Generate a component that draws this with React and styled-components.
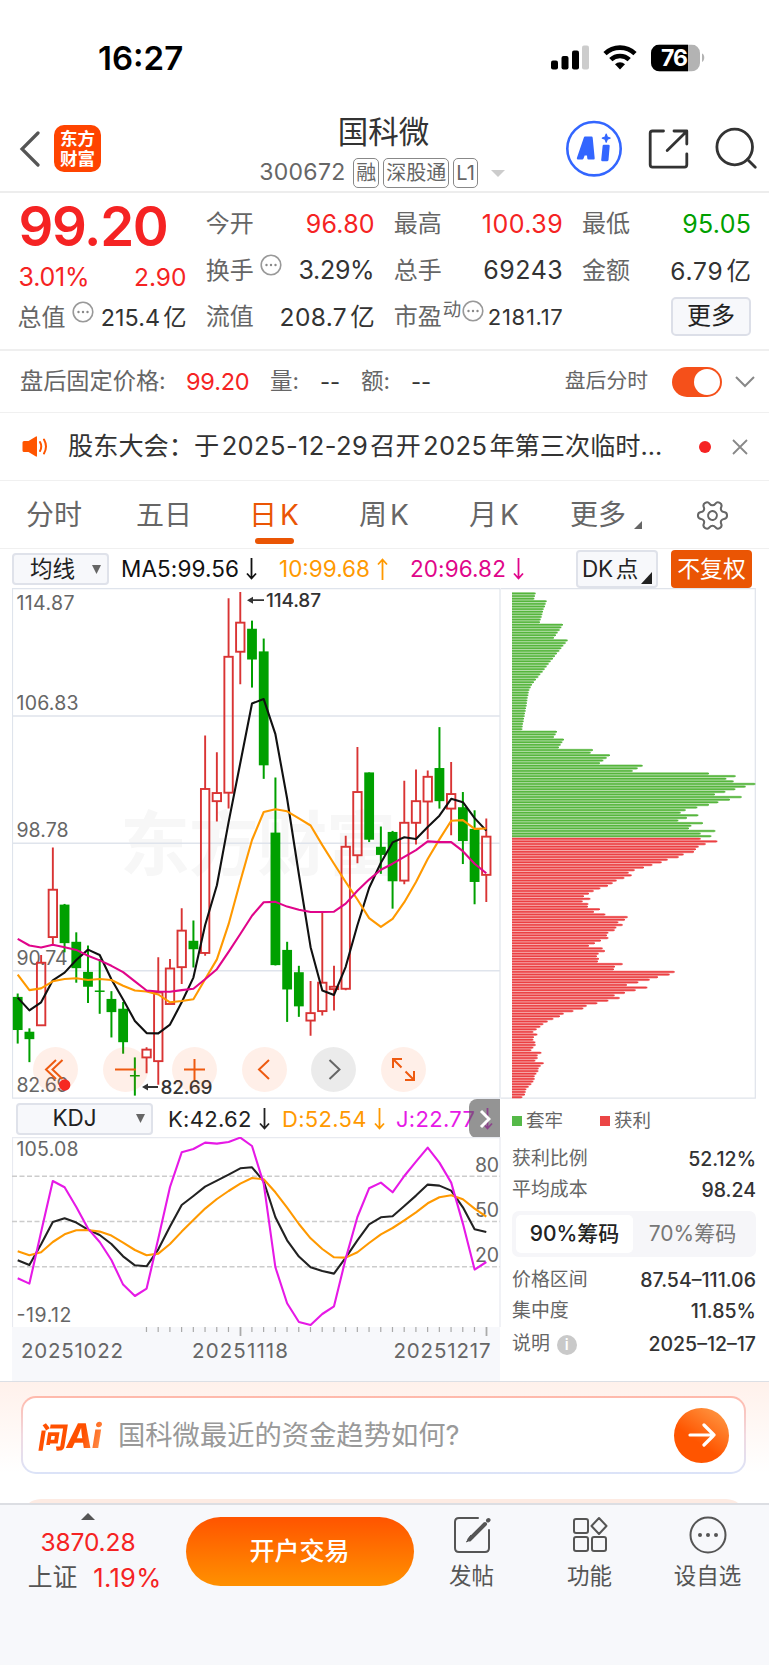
import React from "react";
import styled, { createGlobalStyle } from "styled-components";
import { Settings } from "lucide-react";

const GlobalStyle = createGlobalStyle`
  * {
    box-sizing: border-box;
  }
  body {
    margin: 0;
    background: #fff;
    color: #333;
    font-family: Inter, "Noto Sans CJK SC", sans-serif;
  }
  svg {
    display: block;
    flex: none;
  }
`;

/* ---------- chart data ---------- */

// [up, body top, body bottom, wick top, wick bottom]
const CANDLES = [
  [0, 1232, 1330, 1222, 1370], [0, 1335, 1357, 1325, 1425], [1, 1131, 1316, 1108, 1316],
  [1, 915, 1055, 790, 1078], [0, 959, 1073, 957, 1100], [0, 1069, 1147, 1041, 1190],
  [0, 1158, 1202, 1080, 1250], [0, 1213, 1217, 1120, 1282], [0, 1238, 1277, 1215, 1352],
  [0, 1267, 1366, 1247, 1400], [0, 1463, 1467, 1411, 1524], [1, 1388, 1411, 1381, 1458],
  [1, 1219, 1422, 1115, 1492], [1, 1148, 1253, 1120, 1253], [1, 1036, 1144, 970, 1194],
  [0, 1066, 1091, 1006, 1145], [1, 617, 1102, 459, 1110], [1, 629, 653, 508, 713],
  [1, 226, 628, 53, 675], [1, 125, 211, 34, 307], [0, 143, 234, 119, 317],
  [0, 210, 547, 172, 587], [0, 746, 1138, 583, 1139], [0, 1093, 1210, 1069, 1306],
  [0, 1159, 1260, 1140, 1291], [1, 1280, 1302, 1185, 1347], [1, 1190, 1274, 981, 1287],
  [1, 1202, 1209, 1140, 1272], [1, 788, 1208, 755, 1212], [1, 626, 813, 493, 837],
  [0, 568, 767, 568, 774], [0, 788, 812, 728, 868], [0, 744, 890, 741, 971],
  [1, 717, 888, 593, 899], [1, 653, 717, 559, 781], [1, 581, 654, 562, 766],
  [0, 555, 653, 434, 675], [1, 632, 675, 537, 754], [0, 671, 771, 626, 839],
  [0, 735, 892, 680, 958], [1, 758, 871, 704, 951],
];

const MA5 = [
  1234, 1272, 1248, 1183, 1160, 1123, 1092, 1108, 1180, 1240, 1303, 1339, 1340, 1314,
  1248, 1175, 1020, 902, 715, 540, 364, 351, 455, 645, 870, 1085, 1213, 1226, 1143,
  1020, 910, 835, 775, 760, 765, 729, 696, 646, 656, 703, 740,
];
const MA10 = [
  1166, 1212, 1207, 1186, 1179, 1177, 1182, 1179, 1182, 1199, 1213, 1216, 1225, 1248,
  1244, 1239, 1180, 1121, 1017, 890, 768, 685, 677, 683, 704, 725, 783, 838, 892, 944,
  999, 1025, 1001, 952, 892, 824, 766, 711, 709, 735, 734,
];
const MA20 = [
  1060, 1080, 1086, 1078, 1085, 1093, 1110, 1124, 1140, 1159, 1186, 1213, 1216, 1217,
  1212, 1208, 1180, 1150, 1099, 1046, 992, 952, 951, 965, 974, 981, 981, 980, 956, 918,
  885, 856, 838, 818, 798, 772, 774, 774, 801, 838, 866,
];

const KDJ_K = [
  510, 524, 462, 395, 384, 397, 418, 434, 461, 498, 525, 528, 477, 409, 344, 317, 289,
  271, 253, 234, 231, 273, 381, 450, 499, 531, 542, 550, 502, 450, 402, 381, 378, 347,
  316, 283, 286, 301, 351, 417, 425,
];
const KDJ_D = [
  483, 495, 486, 455, 432, 420, 419, 424, 436, 457, 479, 495, 490, 461, 424, 389, 355,
  326, 302, 280, 263, 267, 306, 352, 401, 444, 476, 501, 502, 486, 458, 432, 413, 390,
  366, 339, 321, 315, 327, 355, 379,
];
const KDJ_J = [
  564, 580, 425, 272, 291, 350, 415, 455, 509, 583, 617, 595, 445, 290, 186, 176, 157,
  160, 155, 142, 167, 280, 531, 639, 695, 704, 671, 648, 505, 380, 294, 277, 306, 257,
  214, 172, 217, 277, 400, 538, 515,
];

// chip distribution, one value per price level
const CHIPS_LOSS = [
  107, 105, 103, 140, 137, 135, 131, 129, 127, 125, 122, 120, 189, 184, 179, 173, 168,
  162, 203, 197, 190, 184, 178, 171, 165, 159, 152, 146, 140, 134, 128, 121, 115, 108,
  102, 96, 92, 88, 86, 85, 83, 82, 81, 80, 78, 77, 75, 74, 72, 71, 69, 68, 67, 171, 167,
  162, 192, 187, 182, 177, 279, 272, 330, 320, 310, 300, 428, 413, 398, 627, 707, 679,
  701, 766, 737, 706, 676, 645, 725, 690, 655, 627, 592, 557, 542, 595, 561, 535, 609,
  574, 567, 646, 602, 634,
];
const CHIPS_GAIN = [
  602, 652, 617, 596, 588, 582, 551, 536, 503, 485, 457, 432, 404, 386, 395, 373, 350,
  338, 324, 301, 281, 267, 252, 271, 248, 265, 264, 300, 282, 316, 383, 375, 355, 368,
  349, 344, 325, 321, 325, 303, 285, 267, 308, 315, 296, 291, 297, 294, 368, 345, 342,
  524, 509, 474, 449, 415, 381, 442, 407, 375, 344, 359, 325, 292, 260, 250, 220, 191,
  180, 160, 143, 130, 121, 110, 100, 112, 102, 100, 106, 107, 100, 94, 124, 113, 113,
  106, 131, 122, 116, 115, 109, 104, 104, 100, 94, 86, 79, 77, 75, 67,
];

const STEP = 11.715;
const xAt = (i) => 5.7 + i * STEP;
const priceY = (v) => v / 2.958 - 7.6;
const kdjY = (v) => v / 3 - 46.7;
const toPoints = (list, y) =>
  list.map((v, i) => `${xAt(i).toFixed(1)},${y(v).toFixed(1)}`).join(" ");

/* ---------- shared ---------- */

const Page = styled.div`
  width: 769px;
  height: 1665px;
  overflow: hidden;
  display: flex;
  flex-direction: column;
  background: #fff;
`;

const Text = styled.span`
  font-size: ${(p) => p.$size || 25}px;
  line-height: 1;
  color: ${(p) => p.$color || "#333"};
  font-weight: ${(p) => p.$weight || 400};
  letter-spacing: ${(p) => p.$ls || 0}px;
  margin-right: ${(p) => -(p.$ls || 0)}px;
  white-space: nowrap;
`;

const Row = styled.div`
  display: flex;
  align-items: center;
  gap: ${(p) => p.$gap || 0}px;
`;

/* ---------- status bar ---------- */

const StatusBar = styled.div`
  height: 106px;
  padding: 10px 63px 0 98px;
  display: flex;
  align-items: center;
  justify-content: space-between;
`;

const StatusIcons = () => (
  <svg width="156" height="30" viewBox="550 42.500 156 30">
    <rect x="551" y="60" width="7" height="9" rx="2" />
    <rect x="561.5" y="55.5" width="7" height="13.5" rx="2" />
    <rect x="572" y="50" width="7" height="19" rx="2" />
    <rect x="582" y="45" width="7" height="24" rx="2" fill="#ccc" />
    <g fill="none" stroke="#000" strokeWidth="4.6">
      <path d="M605 53.2a21.500 21.500 0 0 1 30 0" />
      <path d="M610.800 59.200a13.200 13.200 0 0 1 18.400 0" />
    </g>
    <path d="M620 69l-5-5.200a7.200 7.200 0 0 1 10 0z" />
    <clipPath id="cell">
      <rect x="651" y="44" width="49" height="27" rx="8.500" />
    </clipPath>
    <g clipPath="url(#cell)">
      <rect x="651" y="44" width="49" height="27" fill="#b3b3b3" />
      <rect x="651" y="44" width="37" height="27" />
    </g>
    <path d="M702 53c3 1 3 7 0 8.500z" fill="#b3b3b3" />
    <text x="661" y="65.500" fontSize="23" fontWeight="700" fill="#fff" textLength="27">
      76
    </text>
  </svg>
);

/* ---------- header ---------- */

const HeaderBar = styled.header`
  height: 87px;
  border-bottom: 2px solid #ededed;
  display: grid;
  grid-template-columns: 240px 1fr 240px;
  align-items: center;
`;

const HeaderLeft = styled.div`
  display: flex;
  align-items: center;
  gap: 14px;
  padding: 0 0 0 19px;
`;

const Logo = styled.div`
  width: 47px;
  height: 47px;
  border-radius: 10px;
  background: #ff4400;
  color: #fff;
  display: flex;
  flex-direction: column;
  align-items: center;
  justify-content: center;
  font-size: 17.500px;
  line-height: 19.500px;
  font-weight: 600;
`;

const HeaderTitle = styled.div`
  display: flex;
  flex-direction: column;
  align-items: center;
  gap: 10px;
  padding: 8px 2px 0 0;
`;

const Badge = styled.span`
  height: 30px;
  padding: 0 2px;
  border: 1.500px solid #888;
  border-radius: 5px;
  font-size: 20px;
  line-height: 28px;
  color: #666;
`;

const Code = styled(Text)`
  padding-right: 4px;
`;

const HeaderRight = styled.div`
  display: flex;
  justify-content: flex-end;
  padding: 1px 11px 0 0;
`;

const Header = () => (
  <HeaderBar>
    <HeaderLeft>
      <svg width="21" height="36" viewBox="0 0 21 36" fill="none">
        <path d="M19 2L3 18l16 16" stroke="#555" strokeWidth="3.200" strokeLinecap="round" />
      </svg>
      <Logo>
        <span>东方</span>
        <span>财富</span>
      </Logo>
    </HeaderLeft>
    <HeaderTitle>
      <Text $size={30.500}>国科微</Text>
      <Row $gap={4}>
        <Code $size={23} $color="#666" $ls={0.3}>300672</Code>
        <Badge>融</Badge>
        <Badge>深股通</Badge>
        <Badge>L1</Badge>
        <svg width="26" height="8" viewBox="0 0 26 8">
          <path d="M9 1h14l-7 7z" fill="#ccc" />
        </svg>
      </Row>
    </HeaderTitle>
    <HeaderRight>
      <svg width="192" height="58" viewBox="566 119 192 58" fill="none">
        <circle cx="594" cy="147.700" r="26.700" stroke="#3366ff" strokeWidth="2.600" />
        <g fill="#3366ff" stroke="#3366ff" strokeWidth="2.400" strokeLinejoin="round">
          <path
            fillRule="evenodd"
            d="M578 157.300l7-20.500h6.500l2 20.500h-5l-.4-4h-4.300l-1.500 4zM585.800 149.700h2.300l-.4-5.200z"
          />
          <path d="M603.800 145h4.700l-1.200 14h-4.900z" />
          <path strokeWidth="1.200" d="M606.200 133l1.100 3 2.800 1.100-2.800 1.100-1.100 3-1.100-3-2.800-1.100 2.800-1.100z" />
        </g>
        <g stroke="#333" strokeWidth="2.800" strokeLinecap="round" strokeLinejoin="round">
          <path d="M663.500 130h-11q-2.300 0-2.300 2.300v31.500q0 2.300 2.300 2.300h32q2.300 0 2.300-2.300v-11" />
          <path d="M674 130h12.800v13M686 131l-18.800 18.500" />
          <circle cx="734.700" cy="146" r="17.800" />
          <path d="M747.500 158.500l7.800 7.800" />
        </g>
      </svg>
    </HeaderRight>
  </HeaderBar>
);

/* ---------- quotes ---------- */

const Quotes = styled.section`
  height: 158px;
  border-bottom: 2px solid #efefef;
  padding: 8px 18px 0 18.500px;
  display: grid;
  grid-template-columns: repeat(4, 168px);
  justify-content: space-between;
`;

const QuoteRow = styled.div`
  height: ${(p) => p.$h || 46.500}px;
  display: flex;
  align-items: center;
  justify-content: space-between;
`;

const Label = styled.div`
  display: flex;
  align-items: center;
  margin-left: -1px;
  font-size: 24px;
  line-height: 1;
  color: #666;
  white-space: nowrap;
`;

const Unit = styled.span`
  margin-left: 3px;
`;

const MoreButton = styled.button`
  width: 80px;
  height: 39px;
  margin: -2px 0 0 auto;
  padding: 0 0 1px;
  border: 2px solid #dcdfe8;
  border-radius: 5px;
  background: #f7f8fb;
  font: inherit;
  font-size: 24px;
  line-height: 1;
  color: #222;
`;

const Sup = styled.span`
  font-size: 18.500px;
  margin: -16px 0 0 1px;
`;

const HintSvg = styled.svg`
  margin: -12px 0 0 ${(p) => p.$left}px;
`;

const Hint = ({ left = 6 }) => (
  <HintSvg $left={left} width="22" height="22" viewBox="0 0 22 22" fill="none">
    <circle cx="11" cy="11" r="9.800" stroke="#999" strokeWidth="1.600" />
    <g fill="#888">
      <circle cx="6.500" cy="11" r="1.200" />
      <circle cx="11" cy="11" r="1.200" />
      <circle cx="15.500" cy="11" r="1.200" />
    </g>
  </HintSvg>
);

const RED = "#f52323";
const GREEN = "#00a000";

const QuoteBoard = () => (
  <Quotes>
    <div>
      <QuoteRow $h={51}>
        <Text $size={54.500} $weight={600} $color={RED} $ls={-1.3}>99.20</Text>
      </QuoteRow>
      <QuoteRow $h={50}>
        <Text $color={RED} $ls={-0.2}>3.01%</Text>
        <Text $size={24.500} $color={RED}>2.90</Text>
      </QuoteRow>
      <QuoteRow $h={32}>
        <Label>总值<Hint /></Label>
        <Text $size={23.300} $ls={0.1}>215.4<Unit>亿</Unit></Text>
      </QuoteRow>
    </div>
    <div>
      <QuoteRow><Label>今开</Label><Text $color={RED} $ls={0.2}>96.80</Text></QuoteRow>
      <QuoteRow><Label>换手<Hint /></Label><Text $ls={-0.3}>3.29%</Text></QuoteRow>
      <QuoteRow><Label>流值</Label><Text $size={24.500} $ls={0.4}>208.7<Unit>亿</Unit></Text></QuoteRow>
    </div>
    <div>
      <QuoteRow><Label>最高</Label><Text $color={RED} $ls={0.5}>100.39</Text></QuoteRow>
      <QuoteRow><Label>总手</Label><Text $ls={0.5}>69243</Text></QuoteRow>
      <QuoteRow>
        <Label>市盈<Sup>动</Sup><Hint left={1} /></Label>
        <Text $size={22} $ls={0.7}>2181.17</Text>
      </QuoteRow>
    </div>
    <div>
      <QuoteRow><Label>最低</Label><Text $color={GREEN} $ls={0.3}>95.05</Text></QuoteRow>
      <QuoteRow><Label>金额</Label><Text $size={24.500} $ls={0.8}>6.79<Unit>亿</Unit></Text></QuoteRow>
      <QuoteRow><MoreButton>更多</MoreButton></QuoteRow>
    </div>
  </Quotes>
);

/* ---------- after hours + news ---------- */

const AfterHoursBar = styled.section`
  height: 62px;
  border-bottom: 1px solid #f0f0f0;
  padding: 0 14px 0 20px;
  display: flex;
  align-items: center;
`;

const Cell = styled.div`
  width: ${(p) => p.$w}px;
  flex: none;
  line-height: 1;
  white-space: nowrap;
`;

const Toggle = styled.div`
  width: 50px;
  height: 30px;
  margin: 0 13px 0 24px;
  padding: 2px;
  border-radius: 15px;
  background: #f5501a;
  display: flex;
  justify-content: flex-end;
  &::after {
    content: "";
    width: 26px;
    height: 26px;
    border-radius: 50%;
    background: #fff;
  }
`;

const Spacer = styled.div`
  flex: 1;
`;

const AfterHours = () => (
  <AfterHoursBar>
    <Cell $w={166}><Text $size={23.200} $color="#666">盘后固定价格:</Text></Cell>
    <Cell $w={84}><Text $size={23.500} $color={RED} $ls={-0.2}>99.20</Text></Cell>
    <Cell $w={50}><Text $size={22.500} $color="#666">量:</Text></Cell>
    <Cell $w={41}><Text $size={22}>--</Text></Cell>
    <Cell $w={50}><Text $size={22.500} $color="#666">额:</Text></Cell>
    <Cell $w={42}><Text $size={22}>--</Text></Cell>
    <Spacer />
    <Text $size={20.800} $color="#666">盘后分时</Text>
    <Toggle />
    <svg width="20" height="12" viewBox="0 0 20 12" fill="none" stroke="#888" strokeWidth="2">
      <path d="M1 1l9 9 9-9" />
    </svg>
  </AfterHoursBar>
);

const NewsBar = styled.section`
  height: 68px;
  border-bottom: 1px solid #f0f0f0;
  padding: 0 21px 0 22px;
  display: flex;
  align-items: center;
`;

const NewsText = styled.div`
  flex: 1;
  padding: 0 0 0 20px;
  font-size: 25.200px;
  line-height: 1;
  white-space: nowrap;
`;

const Num = styled.span`
  margin: 0 2px 0 2.500px;
  font-size: 25.500px;
  letter-spacing: 0.4px;
`;

const Dot = styled.span`
  width: 12px;
  height: 12px;
  border-radius: 50%;
  background: ${RED};
  margin-right: 21px;
`;

const News = () => (
  <NewsBar>
    <svg width="26" height="21" viewBox="0 0 26 21" fill="none">
      <path d="M2 5h4.500L14 .500q1-.500 1 .800v18.400q0 1.300-1 .800L6.500 16H2q-1.500 0-1.500-1.500v-8Q.500 5 2 5z" fill="#ff5500" />
      <g stroke="#ff5500" strokeWidth="2" strokeLinecap="round">
        <path d="M18 6q2.500 4.500 0 9M22 3.500q4 7 0 14" />
      </g>
    </svg>
    <NewsText>
      股东大会：于<Num>2025-12-29</Num>召开<Num>2025</Num>年第三次临时...
    </NewsText>
    <Dot />
    <svg width="16" height="16" viewBox="0 0 16 16" stroke="#888" strokeWidth="1.800">
      <path d="M1 1l14 14M15 1L1 15" />
    </svg>
  </NewsBar>
);

/* ---------- tabs ---------- */

const TabBar = styled.nav`
  height: 68px;
  border-bottom: 1px solid #f0f0f0;
  padding: 1px 39px 0 26px;
  display: flex;
  align-items: center;
`;

const Tab = styled.div`
  width: ${(p) => p.$w}px;
  flex: none;
  font-size: 28px;
  line-height: 1;
  word-spacing: -5px;
  color: ${(p) => (p.$active ? "#ea5504" : "#666")};
  white-space: nowrap;
`;

const TabLabel = styled.span`
  position: relative;
  display: inline-flex;
  align-items: flex-end;
  gap: ${(p) => p.$gap || 0}px;
  white-space: pre;
  &::after {
    content: "";
    display: ${(p) => (p.$active ? "block" : "none")};
    position: absolute;
    left: 6px;
    bottom: -15px;
    width: 39px;
    height: 6px;
    border-radius: 3px;
    background: #ea5504;
  }
`;

const GearBox = styled.div`
  margin-left: auto;
  transform: rotate(30deg);
`;

const TABS = [
  { label: "分时", width: 110 },
  { label: "五日", width: 113 },
  { label: "日 K", width: 110, active: true },
  { label: "周 K", width: 110 },
  { label: "月 K", width: 101 },
];

const Tabs = () => (
  <TabBar>
    {TABS.map((tab) => (
      <Tab key={tab.label} $w={tab.width} $active={tab.active}>
        <TabLabel $active={tab.active}>{tab.label}</TabLabel>
      </Tab>
    ))}
    <Tab $w={80}>
      <TabLabel $gap={8}>
        更多
        <svg width="8" height="8" viewBox="0 0 8 8"><path d="M8 0v8H0z" fill="#666" /></svg>
      </TabLabel>
    </Tab>
    <GearBox>
      <Settings size={35} strokeWidth={1.400} color="#666" />
    </GearBox>
  </TabBar>
);

/* ---------- indicators ---------- */

const IndicatorBar = styled.div`
  height: 39px;
  padding: 1px 17px 0 12px;
  display: flex;
  align-items: center;
`;

const Select = styled.div`
  width: ${(p) => p.$w}px;
  height: 32px;
  margin-right: ${(p) => p.$mr}px;
  padding: 0 6px 0 0;
  flex: none;
  border: 2px solid #dfe2ea;
  border-radius: 4px;
  background: #f7f8fb;
  display: flex;
  align-items: center;
`;

const SelectText = styled.span`
  flex: 1;
  padding-right: ${(p) => p.$pr || 0}px;
  text-align: center;
  font-size: 22.500px;
  line-height: 1;
  color: #222;
`;

const Value = styled.div`
  width: ${(p) => p.$w}px;
  flex: none;
  display: flex;
  align-items: center;
  gap: 7px;
  color: ${(p) => p.$color};
  font-size: ${(p) => p.$size || 22.500}px;
  line-height: 1;
  letter-spacing: ${(p) => p.$ls || 0}px;
  white-space: nowrap;
`;

const DkButton = styled.div`
  width: 82px;
  height: 38px;
  padding: 0 4px;
  border: 2px solid #dfe2ea;
  border-radius: 4px;
  background: #f7f8fb;
  display: flex;
  align-items: center;
  justify-content: space-between;
  color: #222;
  font-size: 22.500px;
  line-height: 1;
  white-space: nowrap;
  word-spacing: -3px;
  letter-spacing: -0.3px;
  svg {
    align-self: flex-end;
    margin: 0 0 2px -4px;
  }
`;

const RightsButton = styled.div`
  width: 81px;
  height: 38px;
  margin-left: auto;
  border-radius: 4px;
  background: #ea5504;
  color: #fff;
  font-size: 22.800px;
  line-height: 38px;
  text-align: center;
`;

const Caret = () => (
  <svg width="9" height="9" viewBox="0 0 9 9"><path d="M0 0h9L4.500 9z" fill="#666" /></svg>
);

const Trend = ({ up }) => (
  <svg width="11" height="22" viewBox="0 0 11 22" fill="none" stroke="currentColor" strokeWidth="1.800">
    <path d={up ? "M5.500 22V1.500M1 6.500l4.500-5 4.500 5" : "M5.500 0v20.500M1 15.500l4.500 5 4.500-5"} />
  </svg>
);

const PINK = "#e0058a";

const MaIndicators = () => (
  <IndicatorBar>
    <Select $w={97} $mr={12}><SelectText $pr={1}>均线</SelectText><Caret /></Select>
    <Value $w={158} $color="#111" $ls={0.1}>MA5:99.56<Trend /></Value>
    <Value $w={131} $color="#ff9900">10:99.68<Trend up /></Value>
    <Value $w={166} $color={PINK} $ls={0.1}>20:96.82<Trend /></Value>
    <DkButton>
      DK 点
      <svg width="11" height="12" viewBox="0 0 11 12"><path d="M11 0v12H0z" fill="#222" /></svg>
    </DkButton>
    <RightsButton>不复权</RightsButton>
  </IndicatorBar>
);

/* ---------- charts ---------- */

const ChartArea = styled.section`
  height: 794px;
  padding-left: 12px;
  border-bottom: 1px solid #dcdfe5;
  display: grid;
  grid-template-columns: 489px 268px;
  overflow: hidden;
`;

const KPane = styled.div`
  position: relative;
  height: 511px;
`;

const FloatRow = styled.div`
  position: absolute;
  left: 21px;
  top: 459px;
  display: flex;
  gap: 24.500px;
`;

const FloatButton = styled.div`
  width: 45px;
  height: 45px;
  border-radius: 50%;
  background: ${(p) => (p.$gray ? "rgba(0,0,0,0.08)" : "rgba(255,100,30,0.1)")};
  svg {
    width: 45px;
    height: 45px;
    fill: none;
    stroke: ${(p) => (p.$gray ? "#666" : "#ee5a10")};
    stroke-width: 2;
  }
`;

const FLOAT_ICONS = [
  "M23 13L13 22.500l10 9.500M29.500 13l-10 9.500 10 9.500",
  "M12 22.500h21",
  "M12 22.500h21M22.500 12v21",
  "M27 13l-10 9.500 10 9.500",
  "M18.500 13l10 9.500-10 9.500",
  "M12 21v-9h9M12 12l8.500 8.500M33 24v9h-9M33 33l-8.500-8.500",
];

const Line = ({ data, y, color }) => (
  <polyline points={toPoints(data, y)} fill="none" stroke={color} strokeWidth="2.100" strokeLinejoin="round" />
);

const Candle = ({ i, up, top, bottom, high, low }) => {
  const x = xAt(i);
  const [t, b, h, l] = [top, bottom, high, low].map(priceY);
  if (!up) {
    return (
      <g fill={GREEN}>
        <rect x={x - 1} y={h} width="2" height={l - h} />
        <rect x={x - 4.9} y={t} width="9.800" height={Math.max(b - t, 1.5)} />
      </g>
    );
  }
  return (
    <g fill="none" stroke="#d93434" strokeWidth="1.900">
      <path d={`M${x} ${h}V${t}M${x} ${b}V${l}`} />
      <rect x={x - 4.200} y={t} width="8.400" height={b - t} />
    </g>
  );
};

const PRICE_LABELS = [
  ["114.87", 21.6, 58], ["106.83", 122, 62], ["98.78", 249.3, 52],
  ["90.74", 376.7, 51], ["82.69", 504, 52],
];

const KChart = () => (
  <KPane>
    <svg width="489" height="511" viewBox="0 0 489 511">
      <text x="108" y="281.500" fontSize="70" fontWeight="700" fill="#f7f7f7" textLength="276">
        东方财富
      </text>
      <g stroke="#dfe4ec" strokeWidth="1.600" fill="none">
        <path d="M0 128h488M0 255.300h488M0 382.700h488" />
        <path d="M.5 .6h487.500v509.500H.5z" strokeWidth="1.200" />
      </g>
      <g fontSize="19.500" fill="#666">
        {PRICE_LABELS.map(([label, y, w]) => (
          <text key={label} x="4.500" y={y} textLength={w}>{label}</text>
        ))}
      </g>
      {CANDLES.map(([up, top, bottom, high, low], i) => (
        <Candle key={i} i={i} up={up} top={top} bottom={bottom} high={high} low={low} />
      ))}
      <Line data={MA5} y={priceY} color="#111" />
      <Line data={MA10} y={priceY} color="#ff9900" />
      <Line data={MA20} y={priceY} color={PINK} />
      <g fontSize="19" fontWeight="500" fill="#333">
        <path d="M235 12.200l6-3.500v2.600h11v1.800h-11v2.600z" />
        <text x="254" y="19.300" textLength="55">114.87</text>
        <path d="M130 499l6-3.500v2.600h10v1.800h-10v2.600z" />
        <text x="148.500" y="505.500" textLength="52">82.69</text>
      </g>
      <circle cx="52.700" cy="497" r="5.700" fill={RED} />
    </svg>
    <FloatRow>
      {FLOAT_ICONS.map((d, i) => (
        <FloatButton key={d} $gray={i === 4}>
          <svg viewBox="0 0 45 45"><path d={d} /></svg>
        </FloatButton>
      ))}
    </FloatRow>
  </KPane>
);

const KdjBar = styled.div`
  height: 38px;
  padding: 1px 0 0 4px;
  display: flex;
  align-items: center;
  overflow: hidden;
`;

const Expand = styled.div`
  width: 31px;
  height: 39px;
  margin-left: -25px;
  flex: none;
  border-radius: 8px 0 0 8px;
  background: rgba(90, 90, 90, 0.65);
  display: flex;
  align-items: center;
  justify-content: center;
  z-index: 1;
`;

const Axis = styled.div`
  width: 488px;
  height: 55px;
  background: #f7f8fb;
`;

const KdjPane = () => (
  <>
    <KdjBar>
      <Select $w={137} $mr={15}><SelectText $pr={5}>KDJ</SelectText><Caret /></Select>
      <Value $w={114} $color="#222" $size={22} $ls={0.3}>K:42.62<Trend /></Value>
      <Value $w={114} $color="#ff9900" $size={22} $ls={0.3}>D:52.54<Trend /></Value>
      <Value $w={98} $color="#e619e6" $size={22} $ls={0.3}>J:22.77<Trend /></Value>
      <Expand>
        <svg width="12" height="20" viewBox="0 0 12 20" fill="none" stroke="#fff" strokeWidth="3">
          <path d="M2 2l8 8-8 8" />
        </svg>
      </Expand>
    </KdjBar>
    <svg width="489" height="190" viewBox="0 0 489 190">
      <path d="M.5 190V.6h487.500V190" fill="none" stroke="#e8eaf0" strokeWidth="1.200" />
      <path d="M0 39.300h488M0 84.600h488M0 129.800h488" stroke="#ccc" strokeWidth="1.500" strokeDasharray="5 2.500" />
      <g fontSize="19.500" fill="#666">
        <text x="4.500" y="18.800" textLength="62">105.08</text>
        <text x="4.500" y="185.300" textLength="55">-19.12</text>
        <text x="463" y="34.500" textLength="24">80</text>
        <text x="463" y="79.700" textLength="24">50</text>
        <text x="463" y="125" textLength="24">20</text>
      </g>
      <Line data={KDJ_K} y={kdjY} color="#222" />
      <Line data={KDJ_D} y={kdjY} color="#ff9900" />
      <Line data={KDJ_J} y={kdjY} color="#e619e6" />
    </svg>
    <Axis>
      <svg width="488" height="55" viewBox="0 0 488 55">
        {CANDLES.slice(11).map((_, n) => {
          const i = n + 11;
          const long = i === 19 || i === 40;
          return (
            <rect key={i} x={xAt(i) - 0.7} y="0" width={long ? 1.8 : 1.2} height={long ? 9 : 5} fill="#aaa" />
          );
        })}
        <g fontSize="20.500" fill="#666">
          <text x="9" y="30.500" textLength="102">20251022</text>
          <text x="180" y="30.500" textLength="96">20251118</text>
          <text x="381.500" y="30.500" textLength="97">20251217</text>
        </g>
      </svg>
    </Axis>
  </>
);

/* ---------- chip panel ---------- */

const ChipPanel = styled.div`
  width: 255px;
  display: flex;
  flex-direction: column;
`;

const Stats = styled.div`
  padding-left: 11px;
`;

const Stat = styled.div`
  height: ${(p) => p.$h || 31}px;
  display: flex;
  align-items: center;
  justify-content: space-between;
  font-size: 18.900px;
  line-height: 1;
  color: #666;
  b {
    font-weight: 500;
    font-size: 19.500px;
    color: #333;
  }
`;

const Legend = styled.div`
  height: 45px;
  padding-bottom: 2px;
  display: flex;
  align-items: center;
`;

const LegendItem = styled.div`
  width: 88px;
  display: flex;
  align-items: center;
  gap: 4px;
  font-size: 18.500px;
  line-height: 1;
  color: #666;
  &::before {
    content: "";
    width: 10px;
    height: 10px;
    background: ${(p) => p.$color};
  }
`;

const Segment = styled.div`
  height: 46px;
  margin: 5px 0 8px;
  padding: 4px;
  border-radius: 7px;
  background: #f6f6f9;
  display: grid;
  grid-template-columns: 117px 1fr;
`;

const SegmentItem = styled.div`
  border-radius: 5px;
  background: ${(p) => (p.$active ? "#fff" : "transparent")};
  color: ${(p) => (p.$active ? "#222" : "#777")};
  font-weight: ${(p) => (p.$active ? 500 : 400)};
  font-size: 21px;
  line-height: 38px;
  text-align: center;
  white-space: nowrap;
`;

const Info = styled.span`
  display: inline-flex;
  width: 20px;
  height: 20px;
  margin-left: 7px;
  border-radius: 50%;
  background: #c9c9c9;
  color: #fff;
  font-size: 15px;
  font-weight: 600;
  align-items: center;
  justify-content: center;
`;

const PITCH = 2.61;

const ChipBars = ({ data, from, color }) =>
  data.map((end, i) => {
    const y = 4.2 + (from + i) * PITCH;
    const w = (end - 36) / 3;
    return (
      <g key={i} fill={color}>
        <rect x="11" y={y} width={w - 1} height={PITCH} opacity="0.5" />
        <rect x="11" y={y + 0.5} width={w} height="1.500" />
      </g>
    );
  });

const Chips = () => (
  <ChipPanel>
    <svg width="255" height="511" viewBox="0 0 255 511">
      <path d="M0 .6h254.300v509.500H0" fill="none" stroke="#dfe3ea" strokeWidth="1.200" />
      <ChipBars data={CHIPS_LOSS} from={0} color="#55b53c" />
      <ChipBars data={CHIPS_GAIN} from={CHIPS_LOSS.length} color="#eb3f42" />
    </svg>
    <Stats>
      <Legend>
        <LegendItem $color="#55b948">套牢</LegendItem>
        <LegendItem $color="#eb4545">获利</LegendItem>
      </Legend>
      <Stat>获利比例<b>52.12%</b></Stat>
      <Stat>平均成本<b>98.24</b></Stat>
      <Segment>
        <SegmentItem $active>90%筹码</SegmentItem>
        <SegmentItem>70%筹码</SegmentItem>
      </Segment>
      <Stat>价格区间<b>87.54–111.06</b></Stat>
      <Stat>集中度<b>11.85%</b></Stat>
      <Stat $h={35}>
        <Row>说明<Info>i</Info></Row>
        <b>2025–12–17</b>
      </Stat>
    </Stats>
  </ChipPanel>
);

/* ---------- ask ai ---------- */

const AskArea = styled.section`
  height: 121px;
  padding: 14px 23px 0 21px;
  background: linear-gradient(#fff1eb, #fff 75%);
  display: flex;
  flex-direction: column;
  overflow: hidden;
`;

const AskBox = styled.div`
  height: 78px;
  flex: none;
  padding: 1px 15px 0 16px;
  border: 2px solid transparent;
  border-radius: 15px;
  background:
    linear-gradient(#fff, #fff) padding-box,
    linear-gradient(#ffb9ab, #f1d9e0 50%, #dbe3f8) border-box;
  display: flex;
  align-items: center;
`;

const AskLogo = styled.div`
  width: 79px;
  flex: none;
  font-size: 34px;
  line-height: 1;
  font-weight: 800;
  letter-spacing: -0.8px;
  white-space: nowrap;
  transform: skewX(-9deg);
  color: transparent;
  background: linear-gradient(100deg, #ff5000 55%, #ff9a5a 85%);
  background-clip: text;
  span {
    font-size: 29px;
    font-weight: 900;
    letter-spacing: -1px;
  }
`;

const AskText = styled.div`
  flex: 1;
  font-size: 27.300px;
  line-height: 1;
  color: #999;
`;

const Go = styled.div`
  width: 55px;
  height: 55px;
  border-radius: 50%;
  margin-bottom: 1px;
  background: linear-gradient(215deg, #ff9440 10%, #ff5500 60%);
  display: flex;
  align-items: center;
  justify-content: center;
`;

const NextCard = styled.div`
  height: 40px;
  flex: none;
  margin-top: 25px;
  border-radius: 20px;
  background: #fdebe3;
`;

const AskAi = () => (
  <AskArea>
    <AskBox>
      <AskLogo><span>问</span>Ai</AskLogo>
      <AskText>国科微最近的资金趋势如何?</AskText>
      <Go>
        <svg width="28" height="24" viewBox="0 0 28 24" fill="none" stroke="#fff" strokeWidth="3.200" strokeLinecap="round" strokeLinejoin="round">
          <path d="M2 12h24M16 2l10 10-10 10" />
        </svg>
      </Go>
    </AskBox>
    <NextCard />
  </AskArea>
);

/* ---------- bottom bar ---------- */

const Bottom = styled.footer`
  height: 162px;
  border-top: 2px solid #dcdee3;
  background: #f7f8fb;
  padding-left: 21px;
  display: flex;
  align-items: flex-start;
`;

const IndexBox = styled.div`
  width: 134px;
  padding-top: 8px;
  display: flex;
  flex-direction: column;
  align-items: center;
  gap: 10px;
`;

const IndexRow = styled(Row)`
  margin-left: 13px;
`;

const TradeButton = styled.div`
  width: 228px;
  height: 69px;
  margin: 12px 0 0 30.500px;
  border-radius: 35px;
  background: linear-gradient(#ff5400, #ff9100);
  color: #fff;
  font-size: 25px;
  font-weight: 500;
  line-height: 68px;
  text-align: center;
`;

const Actions = styled.div`
  display: flex;
  margin-left: -1px;
`;

const Action = styled.div`
  width: 118px;
  padding-top: 11px;
  display: flex;
  flex-direction: column;
  align-items: center;
  gap: 11px;
  font-size: 22.500px;
  line-height: 1;
  color: #555;
`;

const ActionSvg = styled.svg.attrs({ width: 38, height: 38, viewBox: "0 0 38 38" })`
  fill: none;
  stroke: #555;
  stroke-width: 2;
  stroke-linejoin: round;
  stroke-linecap: round;
`;

const BottomBar = () => (
  <Bottom>
    <IndexBox>
      <svg width="14" height="7" viewBox="0 0 14 7"><path d="M7 0l7 7H0z" fill="#555" /></svg>
      <Text $size={24.500} $color={RED} $ls={-0.1}>3870.28</Text>
      <IndexRow $gap={16}>
        <Text $size={24.800} $color="#555">上证</Text>
        <Text $size={25.500} $color={RED} $ls={0.3}>1.19%</Text>
      </IndexRow>
    </IndexBox>
    <TradeButton>开户交易</TradeButton>
    <Actions>
      <Action>
        <ActionSvg>
          <path d="M25 2H6q-4 0-4 4v26q0 4 4 4h26q4 0 4-4V14" />
          <path d="M32 8L16.500 23.500" strokeWidth="4" />
          <path d="M17.500 19.500l-4 6.500 6.500-4z" fill="#555" strokeWidth="1" />
          <path d="M35.500 4l-.5.500" strokeWidth="4" />
        </ActionSvg>
        发帖
      </Action>
      <Action>
        <ActionSvg>
          <rect x="3" y="3" width="14" height="14" rx="2" />
          <rect x="3" y="21" width="14" height="14" rx="2" />
          <rect x="21" y="21" width="14" height="14" rx="2" />
          <path d="M28 2l7.500 8-7.500 8-7.500-8z" />
        </ActionSvg>
        功能
      </Action>
      <Action>
        <ActionSvg>
          <circle cx="19" cy="19" r="17.500" />
          <g fill="#555" stroke="none">
            <circle cx="11" cy="19" r="2" />
            <circle cx="19" cy="19" r="2" />
            <circle cx="27" cy="19" r="2" />
          </g>
        </ActionSvg>
        设自选
      </Action>
    </Actions>
  </Bottom>
);

const App = () => {
  return (
    <Page>
      <GlobalStyle />
      <StatusBar>
        <Text $size={33} $weight={600} $color="#000">16:27</Text>
        <StatusIcons />
      </StatusBar>
      <Header />
      <QuoteBoard />
      <AfterHours />
      <News />
      <Tabs />
      <MaIndicators />
      <ChartArea>
        <div>
          <KChart />
          <KdjPane />
        </div>
        <Chips />
      </ChartArea>
      <AskAi />
      <BottomBar />
    </Page>
  );
};

export default App;
